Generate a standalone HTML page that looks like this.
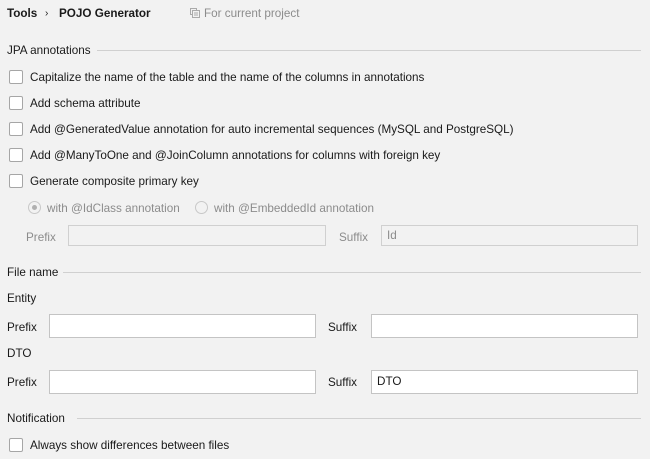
<!DOCTYPE html>
<html><head><meta charset="utf-8"><style>
body{margin:0;width:650px;height:459px;background:#f2f2f2;font-family:"Liberation Sans",sans-serif;font-size:11.7px;color:#1a1a1a;position:relative;overflow:hidden}
.a{position:absolute;white-space:nowrap;line-height:14px;margin-top:1px}
.cb{position:absolute;width:12px;height:12px;border:1px solid #a6a6a6;border-radius:2px;background:#fff}
.ln{position:absolute;height:1px;background:#d0d0d0}
.in{position:absolute;height:21px;border:1px solid #c4c4c4;background:#fff;box-sizing:border-box;padding-left:5px;line-height:19px}
.dis{color:#8c8c8c}
.rd{position:absolute;width:13px;height:13px;border:1px solid #c8c8c8;border-radius:50%;background:#f2f2f2;box-sizing:border-box}
</style></head><body>
<div class="a" style="left:7px;top:6px;font-weight:bold">Tools</div>
<div class="a" style="left:45px;top:6px;font-size:10px">›</div>
<div class="a" style="left:59px;top:6px;font-weight:bold">POJO Generator</div>
<svg style="position:absolute;left:190px;top:8px" width="10" height="10" viewBox="0 0 10 10"><rect x="0.5" y="0.5" width="6" height="6" fill="none" stroke="#aaa"/><rect x="2.5" y="2.5" width="7" height="7" fill="#f2f2f2" stroke="#aaa"/><path d="M4 5h4M4 7h4" stroke="#aaa"/></svg>
<div class="a dis" style="left:204px;top:6px">For current project</div>

<div class="a" style="left:7px;top:43px">JPA annotations</div>
<div class="ln" style="left:97px;width:544px;top:50px"></div>

<div class="cb" style="left:9px;top:70px"></div><div class="a" style="left:30px;top:70px">Capitalize the name of the table and the name of the columns in annotations</div>
<div class="cb" style="left:9px;top:96px"></div><div class="a" style="left:30px;top:96px">Add schema attribute</div>
<div class="cb" style="left:9px;top:122px"></div><div class="a" style="left:30px;top:122px">Add @GeneratedValue annotation for auto incremental sequences (MySQL and PostgreSQL)</div>
<div class="cb" style="left:9px;top:148px"></div><div class="a" style="left:30px;top:148px">Add @ManyToOne and @JoinColumn annotations for columns with foreign key</div>
<div class="cb" style="left:9px;top:174px"></div><div class="a" style="left:30px;top:174px">Generate composite primary key</div>

<div class="rd" style="left:28px;top:201px"><div style="position:absolute;left:3px;top:3px;width:5px;height:5px;border-radius:50%;background:#b0b0b0"></div></div>
<div class="a dis" style="left:47px;top:201px">with @IdClass annotation</div>
<div class="rd" style="left:195px;top:201px"></div>
<div class="a dis" style="left:214px;top:201px">with @EmbeddedId annotation</div>

<div class="a dis" style="left:26px;top:230px">Prefix</div>
<div class="in" style="left:68px;top:225px;width:258px;background:#f2f2f2;border-color:#d0d0d0"></div>
<div class="a dis" style="left:339px;top:230px">Suffix</div>
<div class="in" style="left:381px;top:225px;width:257px;background:#f2f2f2;border-color:#d0d0d0;color:#8c8c8c">Id</div>

<div class="a" style="left:7px;top:265px">File name</div>
<div class="ln" style="left:63px;width:578px;top:272px"></div>
<div class="a" style="left:7px;top:291px">Entity</div>
<div class="a" style="left:7px;top:320px">Prefix</div>
<div class="in" style="left:49px;top:314px;width:267px;height:24px"></div>
<div class="a" style="left:328px;top:320px">Suffix</div>
<div class="in" style="left:371px;top:314px;width:267px;height:24px"></div>

<div class="a" style="left:7px;top:346px">DTO</div>
<div class="a" style="left:7px;top:375px">Prefix</div>
<div class="in" style="left:49px;top:370px;width:267px;height:24px"></div>
<div class="a" style="left:328px;top:375px">Suffix</div>
<div class="in" style="left:371px;top:370px;width:267px;height:24px;line-height:22px">DTO</div>

<div class="a" style="left:7px;top:411px">Notification</div>
<div class="ln" style="left:77px;width:564px;top:418px"></div>
<div class="cb" style="left:9px;top:438px"></div><div class="a" style="left:30px;top:438px">Always show differences between files</div>
</body></html>
